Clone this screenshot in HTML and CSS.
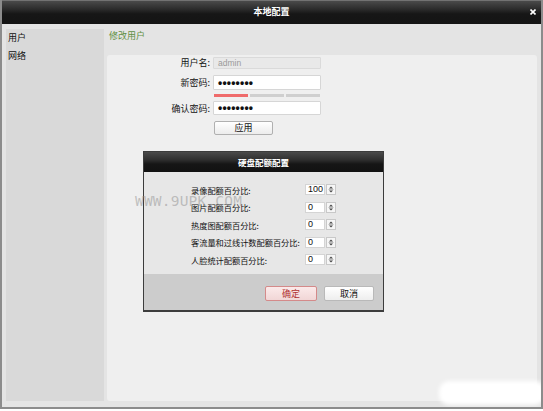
FILE: index.html
```html
<!DOCTYPE html>
<html lang="zh">
<head>
<meta charset="utf-8">
<title>本地配置</title>
<link rel="stylesheet" href="styles.css">
</head>
<body>
<div class="window">
  <div class="titlebar">
    <span class="title">本地配置</span>
    <span class="close"><svg width="6" height="6" viewBox="0 0 6 6"><path d="M0.5 0.5L5.5 5.5M5.5 0.5L0.5 5.5" stroke="#fff" stroke-width="1.6"/></svg></span>
  </div>
  <div class="main">
    <div class="sidebar">
      <div class="nav-item">用户</div>
      <div class="nav-item">网络</div>
    </div>
    <div class="content">
      <div class="heading">修改用户</div>
      <div class="panel">
        <div class="row r-user"><span class="label">用户名:</span><div class="input disabled">admin</div></div>
        <div class="row r-pwd"><span class="label">新密码:</span><div class="input pwd">••••••••</div></div>
        <div class="row r-bars"><span class="label"></span><div class="strength"><i class="weak"></i><i></i><i></i></div></div>
        <div class="row r-confirm"><span class="label">确认密码:</span><div class="input pwd">••••••••</div></div>
        <div class="row r-btn"><span class="label"></span><button class="btn apply">应用</button></div>
      </div>
    </div>
  </div>

  <div class="dialog">
    <div class="dlg-title">硬盘配额配置</div>
    <div class="dlg-body">
      <div class="q-row"><span class="q-label">录像配额百分比:</span><div class="spin"><span class="spin-val">100</span><span class="spin-btn"><svg width="10" height="11" viewBox="0 0 10 11"><path d="M3 4.5L5 2.5L7 4.5Z" fill="#444"/><path d="M2.5 5.5H7.5" stroke="#bbb" stroke-width="1"/><path d="M3 6.5L5 8.5L7 6.5Z" fill="#444"/></svg></span></div></div>
      <div class="q-row"><span class="q-label">图片配额百分比:</span><div class="spin"><span class="spin-val">0</span><span class="spin-btn"><svg width="10" height="11" viewBox="0 0 10 11"><path d="M3 4.5L5 2.5L7 4.5Z" fill="#444"/><path d="M2.5 5.5H7.5" stroke="#bbb" stroke-width="1"/><path d="M3 6.5L5 8.5L7 6.5Z" fill="#444"/></svg></span></div></div>
      <div class="q-row"><span class="q-label">热度图配额百分比:</span><div class="spin"><span class="spin-val">0</span><span class="spin-btn"><svg width="10" height="11" viewBox="0 0 10 11"><path d="M3 4.5L5 2.5L7 4.5Z" fill="#444"/><path d="M2.5 5.5H7.5" stroke="#bbb" stroke-width="1"/><path d="M3 6.5L5 8.5L7 6.5Z" fill="#444"/></svg></span></div></div>
      <div class="q-row"><span class="q-label">客流量和过线计数配额百分比:</span><div class="spin"><span class="spin-val">0</span><span class="spin-btn"><svg width="10" height="11" viewBox="0 0 10 11"><path d="M3 4.5L5 2.5L7 4.5Z" fill="#444"/><path d="M2.5 5.5H7.5" stroke="#bbb" stroke-width="1"/><path d="M3 6.5L5 8.5L7 6.5Z" fill="#444"/></svg></span></div></div>
      <div class="q-row"><span class="q-label">人脸统计配额百分比:</span><div class="spin"><span class="spin-val">0</span><span class="spin-btn"><svg width="10" height="11" viewBox="0 0 10 11"><path d="M3 4.5L5 2.5L7 4.5Z" fill="#444"/><path d="M2.5 5.5H7.5" stroke="#bbb" stroke-width="1"/><path d="M3 6.5L5 8.5L7 6.5Z" fill="#444"/></svg></span></div></div>
    </div>
    <div class="dlg-footer">
      <button class="btn ok">确定</button>
      <button class="btn cancel">取消</button>
    </div>
  </div>

  <div class="watermark">WWW.9UPK.COM</div>
  <div class="smudge"></div>
</div>
</body>
</html>
```

FILE: styles.css
```css
* { box-sizing: border-box; }
html, body { margin: 0; padding: 0; background: #ffffff; }
body {
  font-family: "Noto Sans CJK SC", "Liberation Sans", sans-serif;
  font-size: 9px;
  color: #222;
}
.window {
  position: relative;
  width: 543px;
  height: 409px;
  display: flex;
  flex-direction: column;
  background: #e4e4e4;
  border-left: 2px solid #8c8c8c;
  border-right: 2px solid #8c8c8c;
  border-bottom: 2px solid #8c8c8c;
  overflow: hidden;
}
.titlebar {
  position: relative;
  height: 24px;
  flex: none;
  display: flex;
  align-items: center;
  justify-content: center;
  background: linear-gradient(#9a9a9a 0, #4a4a4a 1px, #2c2c2c 9px, #161616 14px, #141414 100%);
}
.title {
  color: #fff;
  font-weight: bold;
  font-size: 9px;
  line-height: 12px;
}
.close {
  position: absolute;
  right: 5px;
  top: 9px;
  width: 6px;
  height: 6px;
  display: flex;
}
.main {
  flex: 1;
  display: flex;
  gap: 3px;
  padding: 5px 4px 6px 4px;
  min-height: 0;
}
.sidebar {
  width: 98px;
  flex: none;
  background: #d9d9d9;
  padding-left: 2px;
}
.nav-item {
  line-height: 18px;
  height: 18px;
  font-size: 9px;
  color: #111;
}
.content {
  flex: 1;
  display: flex;
  flex-direction: column;
}
.heading {
  line-height: 14px;
  height: 14px;
  margin-bottom: 12px;
  padding-left: 2px;
  color: #5f8f43;
  font-size: 9px;
}
.panel {
  flex: 1;
  background: #efefef;
  border-radius: 3px;
  padding-top: 1px;
}
.row {
  display: flex;
  align-items: center;
  gap: 3px;
}
.label {
  width: 103px;
  flex: none;
  text-align: right;
  font-size: 9px;
  color: #111;
}
.input {
  width: 108px;
  background: #fff;
  border: 1px solid #d6d6d6;
  border-radius: 1px;
  padding-left: 4px;
  display: flex;
  align-items: center;
}
.input.disabled {
  height: 12px;
  background: #e9e9e9;
  color: #9a9a9a;
  font-family: "Liberation Sans", sans-serif;
  font-size: 8.5px;
  border-color: #dadada;
}
.input.pwd {
  font-family: "Liberation Sans", sans-serif;
  font-size: 12px;
  font-weight: bold;
  color: #111;
  letter-spacing: 0.2px;
  line-height: 10px;
}
.r-pwd { margin-top: 6px; }
.r-pwd .input { height: 15px; }
.r-bars { margin-top: 4px; }
.strength {
  width: 108px;
  display: flex;
  gap: 2px;
  padding: 0 1px;
}
.strength i {
  flex: 1;
  height: 3px;
  background: #cfcfcf;
}
.strength i.weak { background: #ef6b6b; }
.r-confirm { margin-top: 4px; }
.r-confirm .input { height: 14px; }
.r-btn { margin-top: 6px; }
.btn {
  font-family: "Noto Sans CJK SC", sans-serif;
  font-size: 9px;
  line-height: 12px;
  padding: 0;
  border-radius: 2px;
  cursor: pointer;
  color: #111;
}
.apply {
  width: 59px;
  height: 14px;
  margin-left: 1px;
  border: 1px solid #b0b0b0;
  background: linear-gradient(#ffffff, #ececec);
}

/* dialog */
.dialog {
  position: absolute;
  left: 141px;
  top: 151px;
  width: 241px;
  height: 161px;
  display: flex;
  flex-direction: column;
  background: #e7e7e7;
  border: 1px solid #3c3c3c;
  border-bottom-width: 2px;
}
.dlg-title {
  height: 20px;
  flex: none;
  display: flex;
  align-items: center;
  justify-content: center;
  color: #fff;
  font-weight: bold;
  font-size: 8.5px;
  background: linear-gradient(#4a4a4a 0, #2e2e2e 8px, #161616 12px, #121212 100%);
}
.dlg-body {
  flex: 1;
  padding: 9px 0 0 47px;
}
.q-row {
  height: 17.5px;
  display: flex;
  align-items: center;
}
.q-label {
  width: 114px;
  flex: none;
  font-size: 8.2px;
  color: #111;
  white-space: nowrap;
}
.spin {
  display: flex;
  gap: 1px;
  height: 11px;
}
.spin-val {
  width: 20px;
  height: 11px;
  background: #fff;
  border: 1px solid #d4d4d4;
  font-family: "Liberation Sans", sans-serif;
  font-size: 9px;
  line-height: 9px;
  padding-left: 2px;
  color: #111;
}
.spin-btn {
  width: 10px;
  height: 11px;
  background: #f6f6f6;
  border: 1px solid #c8c8c8;
  display: flex;
  align-items: center;
  justify-content: center;
  overflow: hidden;
}
.spin-btn svg { flex: none; }
.dlg-footer {
  height: 36px;
  flex: none;
  background: #cccccc;
  display: flex;
  justify-content: flex-end;
  align-items: flex-start;
  gap: 7px;
  padding: 12px 9px 0 0;
}
.ok {
  width: 52px;
  height: 15px;
  border: 1px solid #d48a8a;
  background: linear-gradient(#fbeaea, #f1d6d6);
  color: #b03030;
}
.cancel {
  width: 50px;
  height: 15px;
  border: 1px solid #b9b9b9;
  background: linear-gradient(#ffffff, #eeeeee);
  color: #111;
}

.watermark {
  position: absolute;
  left: 133px;
  top: 193px;
  font-family: "DejaVu Sans Mono", monospace;
  font-size: 14.5px;
  line-height: 16px;
  color: rgba(150, 150, 150, 0.55);
  letter-spacing: 0.2px;
  pointer-events: none;
}
.smudge {
  position: absolute;
  right: -4px;
  bottom: 2px;
  width: 106px;
  height: 24px;
  background: #ffffff;
  border-radius: 10px;
  filter: blur(2px);
}
```
